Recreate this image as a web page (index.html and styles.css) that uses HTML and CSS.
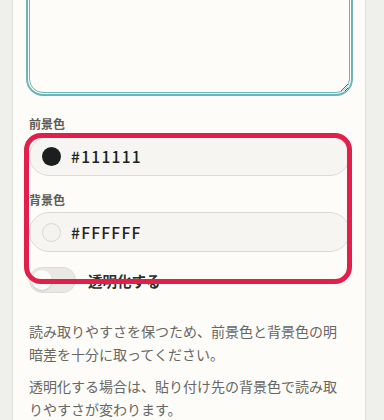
FILE: index.html
```html
<!DOCTYPE html>
<html lang="ja">
    <head>
        <meta charset="utf-8">
        <link rel="stylesheet" href="styles.css">
    </head>
    <body>
        <div class="panel">
            <textarea class="source" spellcheck="false"></textarea>

            <div class="colors">
                <div class="field">
                    <label class="label">前景色</label>
                    <div class="pill">
                        <span class="swatch dark"></span>
                        <span class="hex">#111111</span>
                    </div>
                </div>

                <div class="field">
                    <label class="label">背景色</label>
                    <div class="pill">
                        <span class="swatch light"></span>
                        <span class="hex">#FFFFFF</span>
                    </div>
                </div>

                <div class="toggle-row">
                    <span class="toggle"><span class="knob"></span></span>
                    <span class="toggle-label">透明化する</span>
                </div>

                <div class="highlight"></div>
            </div>

            <p class="note">読み取りやすさを保つため、前景色と背景色の明暗差を十分に取ってください。</p>
            <p class="note">透明化する場合は、貼り付け先の背景色で読み取りやすさが変わります。</p>
        </div>
    </body>
</html>
```

FILE: styles.css
```css
html, body {
    margin: 0;
    height: 100%;
    overflow: hidden;
}
body {
    background: #efefec;
    font-family: "Noto Sans CJK JP", "Noto Sans", sans-serif;
}

.panel {
    box-sizing: border-box;
    width: 354px;
    margin: -100px 0 0 12px;
    padding: 16px 15px 40px 16px;
    background: #fdfcf9;
    border-left: 1px solid #e0dfdb;
    border-right: 1px solid #e0dfdb;
    min-height: 620px;
}

.source {
    display: block;
    box-sizing: border-box;
    width: 100%;
    height: 177px;
    border: 1px solid #6bb5b6;
    border-radius: 14px;
    background: #fdfcf9;
    box-shadow: 0 0 0 1px #fdfcf9, 0 0 0 3px #6bb5b6;
    outline: none;
    resize: vertical;
}

.colors {
    position: relative;
    margin-top: 23px;
}

.field {
    display: flex;
    flex-direction: column;
    gap: 4px;
    margin-bottom: 16px;
}
.field:nth-child(2) {
    margin-bottom: 15px;
}

.label {
    font-size: 12px;
    line-height: 16px;
    font-weight: 700;
    color: #5b5b57;
}

.pill {
    box-sizing: border-box;
    display: flex;
    align-items: center;
    height: 40px;
    padding: 0 12px;
    border: 1px solid #dddbd5;
    border-radius: 20px;
    background: #f6f5f1;
}

.swatch {
    box-sizing: border-box;
    width: 19px;
    height: 19px;
    border-radius: 50%;
    margin-right: 10px;
}
.swatch.dark {
    background: #1b1f1f;
}
.swatch.light {
    background: #f4f3ef;
    border: 1px solid #d9d7d1;
}

.hex {
    font-size: 15.5px;
    font-weight: 500;
    letter-spacing: 1.3px;
    color: #1e2222;
}

.toggle-row {
    display: flex;
    align-items: center;
    gap: 12px;
    height: 26px;
}
.toggle {
    box-sizing: border-box;
    display: flex;
    align-items: center;
    width: 47px;
    height: 26px;
    padding: 2px;
    border: 1px solid #dedcd7;
    border-radius: 13px;
    background: #e9e8e4;
}
.knob {
    width: 20px;
    height: 20px;
    border-radius: 50%;
    background: #fbfbf9;
    box-shadow: 0 1px 2px rgba(0, 0, 0, 0.15);
}
.toggle-label {
    font-size: 14.5px;
    font-weight: 700;
    color: #2e2e2c;
}

.highlight {
    position: absolute;
    left: -5px;
    top: 17px;
    width: 328px;
    height: 151px;
    box-sizing: border-box;
    border: 5px solid #e21e4b;
    border-radius: 17px;
    pointer-events: none;
}

.note {
    margin: 27px 0 0;
    font-size: 14px;
    line-height: 23px;
    color: #676763;
}
.note + .note {
    margin-top: 9px;
}
```
